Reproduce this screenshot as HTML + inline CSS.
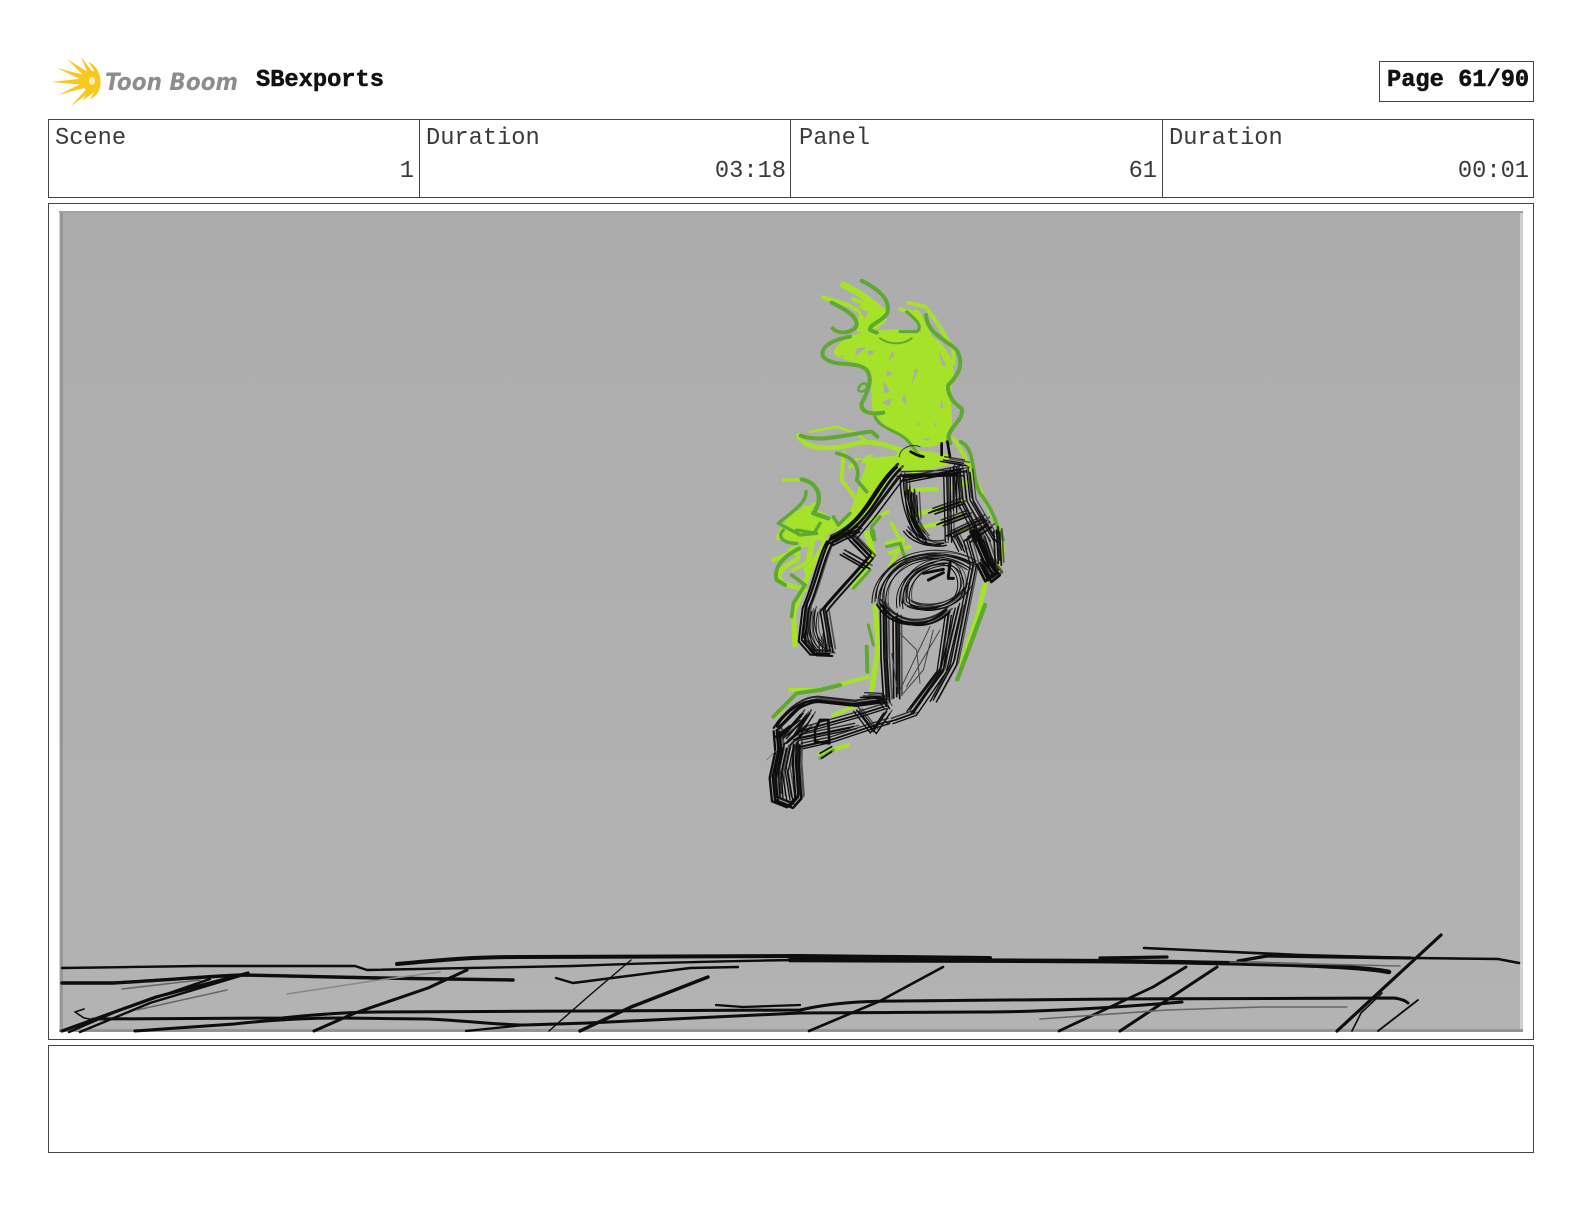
<!DOCTYPE html>
<html><head><meta charset="utf-8"><title>Page 61/90</title>
<style>
html,body{margin:0;padding:0;background:#fff}
body{width:1584px;height:1224px;position:relative;overflow:hidden}
.b{position:absolute;box-sizing:border-box;border:1px solid #444}
.t{position:absolute;font-family:"Liberation Mono",monospace;font-size:23.7px;line-height:28px;color:#3a3a3a;white-space:nowrap}
.s{font-weight:bold;color:#111;-webkit-text-stroke:.5px #111}
.r{text-align:right}
svg{position:absolute;left:0;top:0}
</style></head><body>
<div class="b" style="left:1379px;top:61px;width:155px;height:41px"></div>
<div class="b" style="left:48px;top:119px;width:1486px;height:79px"></div>
<div class="b" style="left:419px;top:119px;width:1px;height:79px;border-width:0 0 0 1px"></div>
<div class="b" style="left:790px;top:119px;width:1px;height:79px;border-width:0 0 0 1px"></div>
<div class="b" style="left:1162px;top:119px;width:1px;height:79px;border-width:0 0 0 1px"></div>
<div class="b" style="left:48px;top:203px;width:1486px;height:837px"></div>
<div class="b" style="left:48px;top:1045px;width:1486px;height:108px"></div>
<div class="t s" style="left:256px;top:67px">SBexports</div>
<div class="t s" style="left:1387px;top:67px">Page 61/90</div>
<div class="t" style="left:55px;top:125px">Scene</div>
<div class="t" style="left:426px;top:125px">Duration</div>
<div class="t" style="left:799px;top:125px">Panel</div>
<div class="t" style="left:1169px;top:125px">Duration</div>
<div class="t r" style="left:200px;width:214px;top:158px">1</div>
<div class="t r" style="left:570px;width:216px;top:158px">03:18</div>
<div class="t r" style="left:940px;width:217px;top:158px">61</div>
<div class="t r" style="left:1310px;width:219px;top:158px">00:01</div>

<svg width="1584" height="1224" viewBox="0 0 1584 1224" xmlns="http://www.w3.org/2000/svg">
<defs>
<linearGradient id="bg" x1="0" y1="0" x2="0" y2="1"><stop offset="0" stop-color="#acacac"/><stop offset="1" stop-color="#b3b3b3"/></linearGradient>
<filter id="soft" x="-5%" y="-5%" width="110%" height="110%"><feGaussianBlur stdDeviation="0.5"/></filter>
<filter id="soft2" x="-5%" y="-5%" width="110%" height="110%"><feGaussianBlur stdDeviation="0.35"/></filter>
<g id="blackU" fill="none" stroke="#0d0d0d" stroke-linecap="round" stroke-linejoin="round">
<path stroke-width="8" d="M470 622 C430 660 400 720 375 750 C345 790 310 820 270 838"/>
<path stroke-width="4" d="M480 650 C450 690 420 730 390 770 L340 830"/>
<path stroke-width="4" d="M480 645 L660 640 M490 660 L670 625 M610 600 L670 610"/>
<path stroke-width="4" d="M490 650 C490 720 510 790 550 840 M505 690 C505 750 520 800 550 830 M520 700 L525 780"/>
<path stroke-width="4" d="M620 640 L625 840 M650 620 L660 720 L720 840 M680 630 L690 720 L760 840 M640 620 L640 750"/>
<path stroke-width="5" d="M575 755 L660 725 M600 790 L680 760 M625 825 L730 775 M680 840 L745 795"/>
</g>
<g id="blackL" fill="none" stroke="#0d0d0d" stroke-linecap="round" stroke-linejoin="round">
<path stroke-width="6" d="M270 30 C245 70 225 170 197 230 L185 330 L220 370 L268 372"/>
<path stroke-width="5" d="M320 10 C345 30 370 60 390 80 C340 140 290 190 250 240 L270 360"/>
<path stroke-width="5" d="M270 40 L350 0 M340 30 L390 80 M310 70 L380 110"/>
<path stroke-width="3" d="M205 240 C195 290 200 340 225 365 M225 240 C215 280 215 320 245 350 M245 320 L248 365"/>
<path stroke-width="3" d="M405 215 C405 160 440 110 500 85 C570 60 650 70 700 100"/>
<path stroke-width="3" d="M430 230 C420 170 450 120 510 95 C580 70 640 80 690 115 M500 215 C490 150 540 100 620 100 C660 110 675 160 650 200 C610 240 530 240 500 215"/>
<path stroke-width="3" d="M480 230 C470 170 510 110 590 95 M510 225 C560 250 640 230 680 170"/>
<path stroke-width="6" d="M420 220 C460 290 560 300 620 240"/>
<path stroke-width="4" d="M500 0 C520 30 570 50 610 40 M640 10 L665 60 M680 30 L700 100 L680 200 L640 400 L580 510"/>
<path stroke-width="8" d="M700 0 L740 90 L770 130 L745 150 L720 100"/>
<path stroke-width="5" d="M770 0 L775 100 M730 30 L760 120"/>
<path stroke-width="5" d="M430 240 L432 380 L440 510 M468 260 L470 500"/>
<path stroke-width="4" d="M655 230 L610 420 L520 550 L450 575 M625 250 L600 420 L510 540"/>
<path stroke-width="6" d="M110 590 C140 540 190 510 230 510 L340 522 L430 510"/>
<path stroke-width="4" d="M370 498 L420 500 L440 530 M350 540 L400 605 L440 545"/>
<path stroke-width="4" d="M190 600 L350 555 L430 530 M170 625 L340 590 M180 650 L270 630 L390 590 L440 575 M130 620 L190 550"/>
<path stroke-width="7" d="M110 600 L115 660 L98 740 L105 810 L150 828 L175 800 L168 700 L170 640"/>
<path stroke-width="4" d="M130 650 L115 720 L120 800 M150 650 L135 720 L150 810 M165 620 L210 550 M120 620 L180 570 M140 640 L200 590"/>
</g>
</defs>

<!-- logo -->
<g filter="url(#soft2)" fill="#f8c81e">
<path d="M51 82 L86 78 L86 85Z"/>
<path d="M57 68 L88 76 L86 82Z"/>
<path d="M67 59 L91 74 L87 79Z"/>
<path d="M81 57 L95 75 L89 76Z"/>
<path d="M58 95 L87 81 L88 87Z"/>
<path d="M71 106 L90 85 L93 90Z"/>
<path d="M82 101 L92 86 L97 90Z"/>
<path d="M88 62 C104 68 105 94 90 99 C96 90 98 85 96 81 C97 75 94 69 88 62Z"/>
<path d="M85 73 L97 70 L97 92 L85 89Z"/>
<ellipse cx="92" cy="81" rx="3" ry="4" fill="#fff3c0"/>
</g>
<text x="105" y="90" font-family="'DejaVu Sans','Liberation Sans',sans-serif" font-weight="bold" font-style="italic" font-size="24" fill="#8d8d8d" textLength="133" lengthAdjust="spacingAndGlyphs">Toon Boom</text>

<!-- panel -->
<rect x="59" y="211" width="1464" height="821" fill="url(#bg)"/>
<rect x="59" y="211" width="1" height="821" fill="#d4d4d4"/>
<rect x="60" y="211" width="3" height="821" fill="#979797"/>
<rect x="1520" y="211" width="3" height="821" fill="#cfcfcf"/>
<rect x="59" y="211" width="1464" height="2" fill="#a2a2a2"/>
<rect x="59" y="1029" width="1464" height="3" fill="#949494"/>

<!-- ground -->
<g fill="none" stroke="#0a0a0a" stroke-linecap="round" stroke-linejoin="round" filter="url(#soft2)">
<path stroke-width="2.4" d="M62 968 L200 966 L355 966 L367 970 C430 969 500 968 573 966 C650 963 720 961 800 960 L1000 960"/>
<path stroke-width="4" d="M397 964 C440 960 470 957 520 957 C620 956 720 956 800 956 L990 958"/>
<path stroke-width="4.5" d="M790 960 L1073 961 C1120 961 1150 962 1167 962 C1280 964 1360 966 1389 972"/>
<path stroke-width="3.4" d="M62 983 L113 983 C170 980 210 976 244 975 L379 978 L513 980"/>
<path stroke-width="2.6" d="M1144 948 L1300 955 L1413 958 L1498 959 L1519 963"/>
<path stroke-width="3.2" d="M1100 958 L1167 957 M1238 961 L1267 956 L1410 958"/>
<path stroke-width="3.2" d="M248 973 L156 997 L62 1031"/>
<path stroke-width="2.4" d="M240 976 L150 1003 L80 1032 M210 979 L120 1010 L69 1032"/>
<path stroke-width="3" d="M467 970 L428 988 L355 1013 L314 1031"/>
<path stroke-width="1.4" d="M631 960 L590 995 L549 1031"/>
<path stroke-width="3.4" d="M708 977 L631 1007 L580 1031"/>
<path stroke-width="2.4" d="M556 978 L573 983 L690 968 L738 967"/>
<path stroke-width="3" d="M93 1019 L282 1018 C320 1014 350 1012 379 1012 L800 1010 C830 1003 861 1001 900 1001 L1120 999 L1394 998 C1402 999 1406 1001 1408 1003"/>
<path stroke-width="3" d="M135 1031 L234 1024 C280 1019 310 1018 340 1018 L428 1019 C470 1021 500 1025 525 1025 L588 1023 L800 1013 L979 1012 C1040 1012 1110 1008 1182 1002"/>
<path stroke-width="2.2" d="M716 1005 L743 1007 L800 1005 M466 1031 L525 1025"/>
<path stroke-width="1.6" d="M84 1009 L75 1012 L84 1018 L95 1020"/>
<path stroke-width="2.6" d="M943 967 L880 1001 L809 1031"/>
<path stroke-width="2.8" d="M1186 967 L1153 987 L1059 1031"/>
<path stroke-width="3" d="M1217 967 L1120 1031"/>
<path stroke-width="3.2" d="M1441 935 L1337 1031"/>
<path stroke-width="1.6" d="M1382 993 L1361 1013 L1352 1031"/>
<path stroke-width="1.8" d="M1418 1000 L1378 1031"/>
<g stroke="#666" stroke-width="1.6">
<path d="M1040 1019 L1167 1010 L1262 1007 L1347 1007"/>
<path d="M122 989 L200 980 M227 990 L137 1010"/>
<path stroke="#888" d="M287 994 L379 980 L440 972"/>
<path d="M1230 962 L1400 966"/>
</g>
</g>

<!-- figure upper: zoom-2 coordinates -->
<g transform="translate(740 260) scale(.33333)" fill="none" stroke-linecap="round" stroke-linejoin="round" filter="url(#soft)">
<g fill="#a6e22c" stroke="none">
<path d="M395 215 C440 205 520 205 570 225 C625 255 655 320 635 380 C625 430 645 480 630 520 C612 560 570 565 530 558 C480 540 425 490 398 455 C390 400 400 340 365 315 C330 300 285 300 280 275 C295 240 350 215 395 215Z"/>
<path d="M470 560 L630 585 L625 615 L520 640 L472 625Z"/>
<path d="M385 595 L480 585 L450 650 L400 745 L345 800 L315 840 L265 840 L335 745Z"/>
<path d="M125 795 L195 735 L265 765 L295 800 L245 840 L105 840Z"/>
<path d="M360 130 L420 150 L440 180 L395 225 L350 215Z"/>
</g>
<g stroke="#a6e22c">
<path stroke-width="12" d="M248 112 C300 125 340 135 385 175 L395 235"/>
<path stroke-width="20" d="M310 75 C350 90 400 130 430 155"/>
<path stroke-width="12" d="M340 118 L400 140 L380 190"/>
<path stroke-width="12" d="M482 148 L540 165 M505 128 L555 140 C590 180 610 220 640 270 L640 310"/>
<path stroke-width="22" d="M530 160 L570 240"/>
<path stroke-width="14" d="M175 525 C190 565 260 575 350 550 C400 540 440 555 480 570"/>
<path stroke-width="8" d="M210 515 L290 500 L350 520 L400 560 L385 620"/>
<path stroke-width="12" d="M310 580 L305 660 L350 720 M330 620 L390 590 M350 600 L430 610"/>
<path stroke-width="10" d="M130 660 L190 660 L230 680 M115 830 L150 770 L230 730"/>
<path stroke-width="12" d="M640 535 C680 590 700 650 735 720 L780 810"/>
<path stroke-width="13" d="M500 690 L590 688 M510 765 L610 745 M545 802 L620 785 M630 685 L690 665 M650 730 L670 725 M650 770 L670 765 M660 815 L680 805"/>
<path stroke-width="11" d="M395 780 L445 755 M455 790 L480 840"/>
</g>
<g fill="#ababab" stroke="none">
<path d="M440 330 L458 340 L440 350Z M430 360 L450 395 L432 400Z M425 425 L455 415 L448 440Z M495 400 L500 435 L485 420Z M525 325 L535 330 L515 375Z M595 270 L620 320 L605 315Z M605 410 L610 445 L600 440Z M350 265 L380 262 L345 290Z M300 285 L315 290 L305 295Z M455 275 L465 280 L445 305Z M530 490 L545 490 L535 497Z M580 490 L595 490 L585 497Z M385 270 L405 275 L385 290Z M545 535 L575 535 L560 542Z"/>
<path d="M355 145 L385 155 L375 175 Z M390 550 L415 570 L392 585Z M345 605 L370 595 L352 635Z"/>
</g>
<g stroke="#5ea832" stroke-width="12">
<path d="M275 128 C320 150 352 170 350 195 C345 215 300 228 278 205"/>
<path d="M365 62 C420 90 452 120 442 160 C420 190 390 190 390 210 L410 218"/>
<path d="M330 230 C270 240 238 265 250 290 C280 325 350 300 380 330 C402 360 380 400 365 430 C360 455 390 465 430 458"/>
<path stroke-width="7" d="M355 385 C365 365 385 365 380 385 C375 395 360 398 355 390"/>
<path stroke-width="9" d="M405 470 C420 510 480 510 510 550 L540 590"/>
<path stroke-width="9" d="M500 155 C530 180 550 200 530 215 L480 215"/>
<path d="M558 165 C560 220 620 240 650 270 C672 310 660 340 625 375 C620 400 640 430 665 445 C672 480 630 500 625 530 L630 550"/>
<path stroke-width="6" d="M420 235 C450 255 490 255 515 235"/>
<path stroke-width="12" d="M182 527 C240 550 330 520 395 515 L412 530"/>
<path stroke-width="11" d="M290 580 C340 590 362 620 350 660 L380 695"/>
<path stroke-width="13" d="M185 658 C240 670 250 720 220 760 L265 775"/>
<path stroke-width="10" d="M198 695 C200 730 150 760 115 790 L175 822"/>
<path stroke-width="11" d="M662 545 C710 570 690 640 720 700 C760 750 770 790 785 840"/>
<path stroke-width="10" d="M280 770 L295 795 L330 760 M225 815 L240 790 M420 770 L395 800 L395 840"/>
</g>
<g stroke="#0d0d0d" stroke-width="8">
<path stroke-width="3" stroke="#333" d="M478 590 C480 565 510 550 540 560"/>
<path d="M512 575 L530 585 L550 590 M605 550 L605 585 M622 545 L630 590"/>
</g>
<use href="#blackU"/>
<use href="#blackU" transform="translate(10 7)"/>
<use href="#blackU" transform="translate(-9 4)"/>
<use href="#blackU" transform="translate(4 -10)" opacity=".8"/>
<use href="#blackU" transform="translate(18 -3)" opacity=".6"/>
</g>

<!-- figure lower: zoom-3 coordinates -->
<g transform="translate(740 530) scale(.33333)" fill="none" stroke-linecap="round" stroke-linejoin="round" filter="url(#soft)">
<g stroke="#a6e22c">
<path stroke-width="16" d="M190 5 L260 30 L220 100 L190 170 L160 250 L165 345"/>
<path stroke-width="14" d="M100 90 C150 70 190 50 170 90 C130 110 100 130 130 160 L195 180"/>
<path stroke-width="12" d="M130 20 L210 40 L150 60 M160 120 L215 90"/>
<path stroke-width="18" d="M220 20 L200 120 M380 10 L400 70 L340 170"/>
<path stroke-width="12" d="M440 40 L490 30 L450 110 M510 50 L450 70"/>
<path stroke-width="16" d="M405 230 L415 350 L395 480"/>
<path stroke-width="15" d="M740 140 L715 250 L665 400"/>
<path stroke-width="12" d="M150 480 L240 480 L385 440 M105 560 L150 510"/>
<path stroke-width="12" d="M280 555 L340 530 M240 670 L325 645"/>
<path stroke-width="11" d="M780 0 L790 60 L770 130"/>
</g>
<g stroke="#5ea832">
<path stroke-width="10" d="M130 0 C110 20 130 40 170 40 M170 0 L230 10 L180 15"/>
<path stroke-width="12" d="M178 55 C130 80 100 110 110 150 L135 165"/>
<path stroke-width="11" d="M155 135 L195 165 L160 220 L155 260"/>
<path stroke-width="9" d="M400 0 L405 30 M340 175 L390 120"/>
<path stroke-width="10" d="M440 50 L480 40 L500 100"/>
<path stroke-width="9" d="M385 285 L400 345"/>
<path stroke-width="12" d="M380 350 L382 425"/>
<path stroke-width="12" d="M100 560 L150 510 L170 490 L240 480 L300 465"/>
<path stroke-width="13" d="M735 225 L700 320 L652 448"/>
<path stroke-width="9" d="M780 0 L790 30 M240 685 L280 660"/>
</g>
<use href="#blackL"/>
<use href="#blackL" transform="translate(9 6)"/>
<use href="#blackL" transform="translate(-9 4)"/>
<use href="#blackL" transform="translate(4 -10)" opacity=".85"/>
<use href="#blackL" transform="translate(16 -4)" opacity=".6"/>
<g stroke="#0d0d0d">
<path stroke-width="9" d="M550 130 L610 118 M565 150 L610 128 M625 145 L640 145 M630 100 L625 140"/>
<path stroke-width="8" d="M225 600 L240 570 L265 570 L268 640 L225 635Z"/>
<path stroke-width="10" d="M120 590 L190 520 M110 620 L150 590"/>
<path stroke-width="3" stroke="#444" d="M480 310 L530 360 L540 460 M580 300 L550 420 L490 490 M455 370 L470 470 M480 480 L570 290 M500 470 L600 300"/>
<path stroke-width="2" stroke="#666" d="M80 690 L110 660"/>
<path stroke-width="5" d="M240 670 L275 650 M245 685 L275 665"/>
</g>
</g>
</svg>
</body></html>
